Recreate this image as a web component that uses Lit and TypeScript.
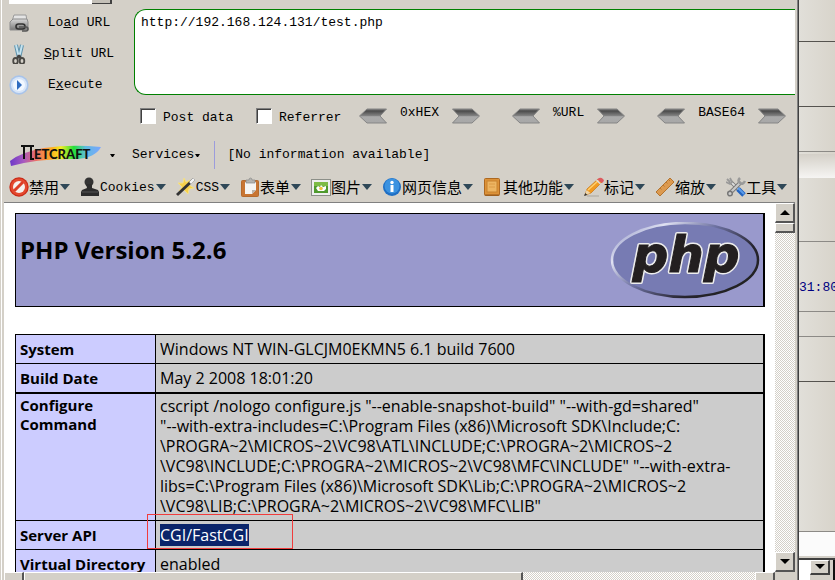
import { LitElement, html, css, svg } from "lit";
import { customElement } from "lit/decorators.js";

const icons: Record<string, unknown> = {
  load: svg`<defs><linearGradient id="ld" x2="0" y2="1"><stop stop-color="#d8d8d8"/><stop offset="1" stop-color="#777"/></linearGradient></defs>
    <path d="M5 2h12l1 6H3z" fill="#e4e4e4" stroke="#9a9a9a"/><path d="M1 9l3-3h14l1 3v8H1z" fill="url(#ld)" stroke="#8c8c8c"/>
    <rect x="7" y="11" width="9" height="5" rx="2.500" fill="none" stroke="#333" stroke-width="1.600"/><path d="M10 14h7q2 0 2 2t-2 2h-4" fill="none" stroke="#555" stroke-width="1.500"/>`,
  split: svg`<path d="M7 1l3 13M13 1l-3 13" stroke="#5f93ad" stroke-width="4"/><path d="M7 1l3 13M13 1l-3 13" stroke="#c4e3f0" stroke-width="2"/>
    <path d="M10 11l-2 4M10 11l2 4" stroke="#444" stroke-width="2.500"/><ellipse cx="6.500" cy="17" rx="2.300" ry="3" fill="none" stroke="#4a4844" stroke-width="1.800"/><ellipse cx="13" cy="17" rx="2.300" ry="3" fill="none" stroke="#4a4844" stroke-width="1.800"/>`,
  run: svg`<circle cx="10" cy="10" r="9.700" fill="#a9c4ea"/><circle cx="10" cy="10" r="8" fill="#d7e5f8"/><circle cx="10" cy="10" r="6" fill="#f1f7ff"/><path d="M8 5l5 5-5 5z" fill="#2f6cc0"/>`,
  ban: svg`<circle cx="10" cy="10" r="9.700" fill="#c92a17"/><circle cx="10" cy="10" r="8.500" fill="#e4492f"/><circle cx="10" cy="10" r="6" fill="#f5f1ee"/><path d="M5 14L14 5" stroke="#dc3e27" stroke-width="3"/>`,
  stamp: svg`<circle cx="9" cy="5" r="4.500" fill="#333"/><path d="M6 7h6l0 4 6 2 1 2v4H1v-4l1-2 5-2z" fill="#2c2c2c"/><path d="M2 15h16" stroke="#555"/>`,
  wand: svg`<path d="M8 1l2 4 4-2-1 5 5 3-5 1-1 5-4-4-5 1 3-4-4-4 5 0z" fill="#f7d14b" stroke="#f3e08b" stroke-width="1"/><path d="M1 18L18 2" stroke="#333" stroke-width="3"/><path d="M14 6l4-4" stroke="#f4f4f4" stroke-width="2.500"/>`,
  clip: svg`<rect x="1.500" y="3.500" width="17" height="16" rx="1" fill="#c87532" stroke="#b56a2c"/><path d="M5 5h11v8l-4 4H5z" fill="#f5f5f3"/><path d="M12 17v-4h4z" fill="#b9b4ad"/><path d="M6 6V3h3q0-2 1.500-2T12 3h3v3z" fill="#b5b5b1" stroke="#888" stroke-width=".7"/>`,
  photo: svg`<rect x="0.500" y="2.500" width="19" height="16" fill="#eee" stroke="#8c8f88"/><rect x="3" y="5" width="14" height="11" fill="#4f9a2d"/><path d="M3 5h14v4H3z" fill="#7dbb45"/><path d="M5 11l2-2 2 1 1-2 2 2 3-1 0 3-2 2-6 0z" fill="#fff"/><circle cx="10" cy="11.500" r="1.800" fill="#f0c23e"/>`,
  info: svg`<circle cx="10" cy="10" r="9" fill="#1f6fc4"/><circle cx="10" cy="9" r="7.500" fill="#3b92e0"/><path d="M10 8v7" stroke="#fff" stroke-width="3"/><circle cx="10" cy="5.500" r="1.700" fill="#fff"/>`,
  book: svg`<rect x="1.500" y="1.500" width="15" height="17" rx="1" fill="#dd9238" stroke="#ad6820"/><rect x="4" y="4" width="10" height="11" fill="#edb562" stroke="#c7822f"/><path d="M6 7h6M6 10h6" stroke="#dc9b46"/><path d="M2 18h14" stroke="#8e541a"/>`,
  pencil: svg`<path d="M3 19h12" stroke="#b9b5ac" stroke-width="1.500"/><path d="M1 18l2-6L14 2l4 3L7 16z" fill="#f19a22" stroke="#c77514" stroke-width=".7"/><path d="M4 13L15 3" stroke="#ffd06d" stroke-width="1.500"/><path d="M13 2.500L15 1q2-1 4 1t-1 4z" fill="#dd5a5e"/><path d="M12.500 3l4 4" stroke="#ddd" stroke-width="1.500"/><path d="M1 18l1.500-5 4 3z" fill="#efd5a8"/><path d="M0 19l1.300-3 2 2z" fill="#333"/>`,
  ruler: svg`<path d="M1 15L15 1l4 4L5 19z" fill="#dc9a50" stroke="#b3742f"/><path d="M5 11l1.500 1.500M8 8l1.500 1.500M11 5l1.500 1.500M14 3l1 1" stroke="#b0702c" stroke-width=".8"/>`,
  tools: svg`<path d="M4 4l12 12" stroke="#777" stroke-width="3.500"/><path d="M4 4l12 12" stroke="#ddd" stroke-width="1.800"/><path d="M1 2l3 3M4 1l2 4-2 2-4-2" fill="none" stroke="#999" stroke-width="1.800"/><path d="M4 16L15 5" stroke="#777" stroke-width="4"/><path d="M4 16L15 5" stroke="#c8c8c8" stroke-width="2.300"/><circle cx="4" cy="16.500" r="2.300" fill="#ccc" stroke="#777" stroke-width="1.500"/><path d="M14 1q-3 3 0 5 3 2 5-2" fill="none" stroke="#999" stroke-width="2.500"/><path d="M12 12l6 6" stroke="#2464c0" stroke-width="5"/><path d="M12 11l6 6" stroke="#5a9bea" stroke-width="2"/>`,
};
const icon = (n: string) => html`<svg class="icon" viewBox="0 0 20 20" aria-hidden="true">${icons[n]}</svg>`;

const chevron = (left: boolean) => html`<svg class="chev" viewBox="0 0 28 16" aria-hidden="true">
  <defs><linearGradient id="cv" x2="0" y2="1"><stop stop-color="#777"/><stop offset=".15" stop-color="#4c4c4c"/><stop offset=".48" stop-color="#828282"/><stop offset=".55" stop-color="#aaa"/><stop offset="1" stop-color="#a8a8a8"/></linearGradient></defs>
  <path d=${left ? "M27.500 1H8L.5 8 8 15h19.500L21 8z" : "M.5 1H20l7.500 7L20 15H.5L7 8z"} fill="url(#cv)" stroke="#858585"/></svg>`;

const tri = (up: boolean) => html`<svg class="tri" viewBox="0 0 10 6" aria-hidden="true"><path d=${up ? "M0 5L5 0l5 5z" : "M0 0h10L5 5z"}/></svg>`;

const menus: [string, string, boolean][] = [
  ["ban", "禁用", false], ["stamp", "Cookies", true], ["wand", "CSS", true], ["clip", "表单", false], ["photo", "图片", false],
  ["info", "网页信息", false], ["book", "其他功能", false], ["pencil", "标记", false], ["ruler", "缩放", false], ["tools", "工具", false],
];

@customElement("hack-bar")
class HackBar extends LitElement {
  static styles = css`
    :host { display: grid; grid-template-columns: 130px minmax(0, 1fr); row-gap: 9px; }
    button { border: 0; background: none; padding: 0; font: inherit; color: inherit; }
    .tools { display: flex; flex-direction: column; gap: 11px; padding: 4px 0 0 5px; }
    .tool { display: grid; grid-template-columns: 20px 1fr; align-items: center; height: 20px; }
    .icon { width: 20px; height: 20px; display: block; }
    .name { text-align: center; padding-right: 5px; }
    .name.start { text-align: left; padding-left: 19px; }
    textarea {
      box-sizing: border-box; width: 100%; height: 86px; display: block; resize: none; overflow: hidden; outline: 0;
      border: 1px solid #008000; border-right: 0; border-radius: 12px 0 0 12px; background: #fff; color: #000;
      padding: 5px 6px; font: 13px/16px "Liberation Mono", monospace;
    }
    .options { grid-column: 2; display: flex; align-items: center; height: 24px; padding-left: 6px; }
    label { display: flex; align-items: center; gap: 7px; width: 116px; }
    label span { padding-top: 4px; }
    input {
      appearance: none; margin: 0; width: 16px; height: 16px; background: #fff;
      border: 1px solid #808080; border-right-color: #fff; border-bottom-color: #fff; box-shadow: inset 1px 1px #404040;
    }
    label.short { width: 103px; }
    .codecs { display: flex; gap: 32px; }
    .codec { display: flex; align-items: center; gap: 13px; }
    .codec span { padding-bottom: 6px; }
    .chev { width: 28px; height: 16px; display: block; }
  `;
  render() {
    return html`
      <div class="tools">
        <button class="tool">${icon("load")}<span class="name">Lo<u>a</u>d URL</span></button>
        <button class="tool">${icon("split")}<span class="name"><u>S</u>plit URL</span></button>
        <button class="tool">${icon("run")}<span class="name start">E<u>x</u>ecute</span></button>
      </div>
      <textarea aria-label="URL" spellcheck="false" .value=${"http://192.168.124.131/test.php"}></textarea>
      <div class="options">
        <label><input type="checkbox" /><span>Post data</span></label>
        <label class="short"><input type="checkbox" /><span>Referrer</span></label>
        <div class="codecs">${["0xHEX", "%URL", "BASE64"].map((t) => html`<div class="codec">
          <button aria-label="Decode ${t}">${chevron(true)}</button><span>${t}</span><button aria-label="Encode ${t}">${chevron(false)}</button></div>`)}</div>
      </div>`;
  }
}

@customElement("netcraft-bar")
class NetcraftBar extends LitElement {
  static styles = css`
    :host { display: flex; align-items: center; height: 28px; padding-left: 5px; }
    button { border: 0; background: none; padding: 0; font: inherit; color: inherit; display: flex; align-items: center; }
    .logo { width: 94px; height: 24px; display: block; }
    .drop { width: 5px; height: 3px; margin-left: 1px; }
    .brand { gap: 6px; width: 123px; }
    .sep { width: 1px; height: 28px; background: #9c9cdc; margin: 0 12px 0 14px; }
  `;
  render() {
    const drop = html`<svg class="drop" viewBox="0 0 5 3" aria-hidden="true"><path d="M0 0h5L3 3H2z" /></svg>`;
    return html`
      <button class="brand" aria-label="Netcraft">
        <svg class="logo" viewBox="0 0 94 24" aria-hidden="true">
          <defs><linearGradient id="rb"><stop stop-color="#6d38c9"/><stop offset=".15" stop-color="#a75ac0"/><stop offset=".3" stop-color="#f07060"/><stop offset=".46" stop-color="#ffb020"/><stop offset=".56" stop-color="#f2ee22"/><stop offset=".7" stop-color="#25df3a"/><stop offset=".83" stop-color="#5fbbe0"/><stop offset="1" stop-color="#7ba5ff"/></linearGradient></defs>
          <path d="M1 18Q12 9 35 5 62 1 92 4 86 15 68 16 30 15 2 23z" fill="url(#rb)" />
          <path d="M12 3h13M15 3v13M22 3v13h3" fill="none" stroke="#111" stroke-width="2"/>
          <text x="25" y="16" font-family="Lato, sans-serif" font-weight="900" font-size="13" fill="#111">ETCRAFT</text>
        </svg>${drop}
      </button>
      <button>Services${drop}</button>
      <span class="sep"></span><span>[No information available]</span>`;
  }
}

@customElement("developer-bar")
class DeveloperBar extends LitElement {
  static styles = css`
    :host { display: flex; gap: 10px; padding: 0 0 0 5px; height: 28px; align-items: center; }
    button { border: 0; background: none; padding: 0; color: #000; display: flex; align-items: center; white-space: nowrap; flex: none;
      font: 15px/20px "Noto Sans CJK SC", sans-serif; }
    .latin { font: 13px/20px "Liberation Mono", monospace; padding-top: 2px; }
    .icon { width: 20px; height: 20px; }
    .arrow { width: 10px; height: 6px; margin-left: 1px; }
  `;
  render() {
    return menus.map(([i, t, latin]) => html`<button>${icon(i)}<span class=${latin ? "latin" : ""}>${t}</span>
      <svg class="arrow" viewBox="0 0 10 6" aria-hidden="true"><path d="M0 0h10L5 6z" fill="#2f4858" /></svg></button>`);
  }
}

@customElement("php-page")
class PhpPage extends LitElement {
  static styles = css`
    :host { display: block; overflow: hidden; background: #fff; padding: 10px 10px 0 11px; font: 16px/20px "Open Sans", sans-serif; color: #000; }
    .banner { display: flex; justify-content: space-between; box-sizing: border-box; height: 94px; border: 1px solid #000; border-right-width: 2px; background: #9999cc; padding: 8px 3px 0 4px; margin-bottom: 27px; }
    h1 { font-size: 24px; line-height: 32px; margin: 12px 0 0; font-weight: 700; }
    .logo { width: 150px; height: 78px; }
    table { width: 100%; border-collapse: collapse; }
    th, td { border: 1px solid #000; padding: 4px; text-align: left; vertical-align: top; }
    th { background: #ccccff; width: 131px; white-space: nowrap; font-size: 15px; }
    td { background: #cccccc; border-right-width: 2px; }
    .thick th, .thick td { border-bottom-width: 2px; }
    .tall th, .tall td { padding: 2px 4px 4px; }
    .tall th { line-height: 19px; }
    .api { position: relative; }
    mark { background: #0a246a; color: #fff; }
    .box { position: absolute; left: -9px; top: -7px; width: 146px; height: 35px; border: 1px solid #f03c3c; box-sizing: border-box; }
  `;
  render() {
    return html`
      <div class="banner">
        <h1>PHP Version 5.2.6</h1>
        <svg class="logo" viewBox="0 0 150 78" role="img" aria-label="PHP">
          <defs><linearGradient id="rim" x2="1" y2=".7"><stop stop-color="#7d83b8"/><stop offset=".25" stop-color="#dfe1f2"/><stop offset=".5" stop-color="#6c70a0"/><stop offset=".8" stop-color="#26242e"/><stop offset="1" stop-color="#222"/></linearGradient></defs>
          <ellipse cx="75" cy="38" rx="73" ry="37" fill="#777bb3" stroke="url(#rim)" stroke-width="2.500" />
          <g stroke="#eee" stroke-width="4" stroke-linejoin="round"><text id="word" x="76" y="50" text-anchor="middle" font-family="DejaVu Sans, sans-serif" font-weight="700" font-style="italic" font-size="50" fill="#231f20">php</text></g>
          <use href="#word" stroke="#231f20" stroke-width="1" />
        </svg>
      </div>
      <table>
        <tr><th scope="row">System</th><td>Windows NT WIN-GLCJM0EKMN5 6.1 build 7600</td></tr>
        <tr class="thick"><th scope="row">Build Date</th><td>May 2 2008 18:01:20</td></tr>
        <tr class="tall"><th scope="row">Configure<br />Command</th><td>cscript /nologo configure.js "--enable-snapshot-build" "--with-gd=shared"<br />"--with-extra-includes=C:\\Program Files (x86)\\Microsoft SDK\\Include;C:<br />\\PROGRA~2\\MICROS~2\\VC98\\ATL\\INCLUDE;C:\\PROGRA~2\\MICROS~2<br />\\VC98\\INCLUDE;C:\\PROGRA~2\\MICROS~2\\VC98\\MFC\\INCLUDE" "--with-extra-<br />libs=C:\\Program Files (x86)\\Microsoft SDK\\Lib;C:\\PROGRA~2\\MICROS~2<br />\\VC98\\LIB;C:\\PROGRA~2\\MICROS~2\\VC98\\MFC\\LIB"</td></tr>
        <tr><th scope="row">Server API</th><td class="api"><mark>CGI/FastCGI</mark><span class="box"></span></td></tr>
        <tr><th scope="row">Virtual Directory</th><td>enabled</td></tr>
      </table>`;
  }
}

@customElement("back-window")
class BackWindow extends LitElement {
  static styles = css`
    :host { display: flex; flex-direction: column; overflow: hidden; background: linear-gradient(90deg, #e1dfd9, #d8d4cb); }
    .cell { box-sizing: border-box; border-bottom: 1px solid #8c8a86; flex: none; }
    .dark { border-color: #55534f; }
    .a { height: 42px; } .b { height: 65px; } .c { height: 45px; }
    .glow { height: 24px; margin-top: 2px; flex: none; background: linear-gradient(#d4d0c8, #f6f5f3); }
    .d { height: 64px; }
    .e { height: 70px; padding-top: 36px; white-space: nowrap; }
    .e a { color: #000080; font: 13px/18px "Liberation Mono", monospace; text-decoration: none; }
    .f { height: 25px; } .g { height: 45px; }
    .cell.rest { flex: 1; }
    .status { height: 24px; flex: none; background: #fbfbfb; }
    .edge { height: 4px; flex: none; box-sizing: border-box; background: #d4d0c8; border-bottom: 2px solid #404040; }
    .foot { box-sizing: border-box; height: 20px; flex: none; display: flex; background: linear-gradient(90deg, #fff 11px, #d4d0c8 11px 34px, #111 34px); padding-left: 11px; }
    .foot button { box-sizing: border-box; width: 20px; height: 15px; padding: 0; border: 1px solid #fff; border-right: 2px solid #404040; border-bottom: 2px solid #404040; background: #d4d0c8; display: grid; place-items: center; }
    .tri { width: 10px; height: 6px; }
  `;
  render() {
    return html`<div class="cell dark a"></div><div class="cell dark b"></div><div class="cell c"></div><div class="glow"></div>
      <div class="cell d"></div><div class="cell e"><a href="#">31:80</a></div><div class="cell f"></div><div class="cell dark g"></div>
      <div class="cell rest"></div><div class="status"></div><div class="edge"></div>
      <div class="foot"><button aria-label="Scroll down">${tri(false)}</button></div>`;
  }
}

@customElement("app-root")
class AppRoot extends LitElement {
  static styles = css`
    :host { display: grid; grid-template-columns: minmax(0, 1fr) 36px; height: 100vh; overflow: hidden; background: #d4d0c8; color: #000; font: 13px/20px "Liberation Mono", monospace; }
    .window { display: flex; flex-direction: column; min-height: 0; box-shadow: inset 1px 0 #d4d0c8, inset 2px 0 #fff; padding-left: 4px; border-right: 1px solid #404040; }
    .inner { display: flex; flex-direction: column; flex: 1; min-height: 0; border-right: 1px solid #808080; padding-right: 2px; }
    .strip { height: 4px; margin: 0 0 5px 5px; display: flex; flex: none; }
    .field { width: 83px; background: #fff; }
    .knob { width: 20px; box-sizing: border-box; border-right: 2px solid #404040; border-bottom: 1px solid #404040; background: #c4c0b8; }
    netcraft-bar { margin-top: 13px; }
    developer-bar { margin-top: 4px; padding-bottom: 1px; }
    .view { flex: 1; min-height: 0; display: grid; grid-template-columns: minmax(0, 1fr) 20px; grid-template-rows: minmax(0, 1fr) 8px; border-top: 1px solid #808080; }
    .dither { background: repeating-conic-gradient(#fff 0 25%, #d4d0c8 0 50%) 0 0 / 2px 2px; }
    .vbar { display: flex; flex-direction: column; }
    .vbar button, .thumb, .hbar button { box-sizing: border-box; flex: none; border: 1px solid #fff; border-right: 2px solid #555; border-bottom: 2px solid #555; background: #d4d0c8; padding: 0; }
    .vbar button { height: 20px; display: grid; place-items: center; }
    .thumb { height: 10px; }
    .fill { flex: 1; }
    .hbar { display: flex; overflow: hidden; }
    .hbar button { width: 20px; height: 20px; }
    .hthumb { flex: 497; background: #d4d0c8; border-top: 1px solid #fff; border-left: 1px solid #fff; border-right: 2px solid #555; }
    .hrest { flex: 233; }
    .tri { width: 10px; height: 6px; }
  `;
  render() {
    return html`
      <div class="window"><div class="inner">
        <div class="strip"><span class="field"></span><span class="knob"></span></div>
        <hack-bar></hack-bar>
        <netcraft-bar></netcraft-bar>
        <developer-bar></developer-bar>
        <div class="view">
          <php-page></php-page>
          <div class="vbar dither"><button aria-label="Scroll up">${tri(true)}</button><div class="thumb"></div><div class="fill"></div><button aria-label="Scroll down">${tri(false)}</button></div>
          <div class="hbar dither"><button aria-label="Scroll left"></button><div class="hthumb"></div><div class="hrest"></div><button aria-label="Scroll right"></button></div>
        </div>
      </div></div>
      <back-window></back-window>`;
  }
}
